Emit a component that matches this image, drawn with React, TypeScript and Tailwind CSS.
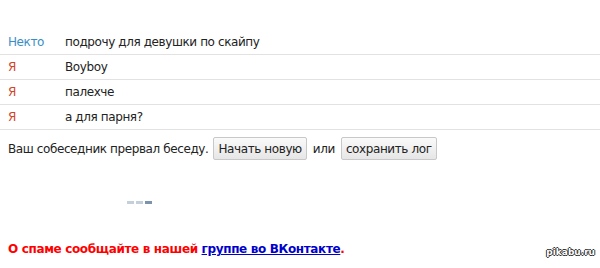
const messages = [
  { who: 'Некто', text: 'подрочу для девушки по скайпу', me: false },
  { who: 'Я', text: 'Boyboy', me: true },
  { who: 'Я', text: 'палехче', me: true },
  { who: 'Я', text: 'а для парня?', me: true },
]

export default function App() {
  return (
    <div className="relative w-[600px] h-[268px] bg-white overflow-hidden font-['DejaVu_Sans',sans-serif] text-[12px] tracking-[-0.4px] text-[#222]">
      <div className="pt-[30px]">
        {messages.map((m, i) => (
          <div key={i} className="flex items-center h-[25px] border-b border-[#e2e2e2]">
            <span className={`w-[65px] pl-2 ${m.me ? 'text-[#d0442a]' : 'text-[#3a8ec6]'}`}>{m.who}</span>
            <span>{m.text}</span>
          </div>
        ))}
      </div>

      <div className="flex items-center pl-2 pt-[7px] gap-[5px]">
        <span>Ваш собеседник прервал беседу.</span>
        <button className="h-[23px] px-[4px] border border-[#c8c8c8] rounded-[2px] bg-gradient-to-b from-[#fafafa] to-[#e6e6e6] text-[#222]">
          Начать новую
        </button>
        <span className="px-[1px]">или</span>
        <button className="h-[23px] px-[4px] border border-[#c8c8c8] rounded-[2px] bg-gradient-to-b from-[#fafafa] to-[#e6e6e6] text-[#222]">
          сохранить лог
        </button>
      </div>

      <div className="flex gap-[2px] pl-[127px] pt-[41px]">
        <div className="w-[7px] h-[3px] bg-[#c3cfdb]" />
        <div className="w-[7px] h-[3px] bg-[#c3cfdb]" />
        <div className="w-[7px] h-[3px] bg-[#7b93ab]" />
      </div>

      <div className="pl-2 pt-[36px] font-bold text-[12px] tracking-[-0.35px] text-[#ff0000]">
        О спаме сообщайте в нашей{' '}
        <a href="#" className="text-[#0000cc] underline">группе во ВКонтакте</a>.
      </div>

      <div className="absolute right-[5px] bottom-[9px] font-['DejaVu_Sans',sans-serif] font-bold text-[9px] tracking-normal text-white [text-shadow:1px_0_0_#333,-1px_0_0_#333,0_1px_0_#333,0_-1px_0_#333]">
        pikabu.ru
      </div>
    </div>
  )
}
